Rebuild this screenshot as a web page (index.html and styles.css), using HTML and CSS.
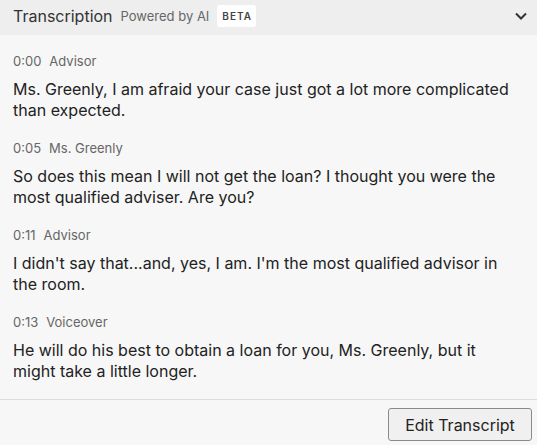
FILE: index.html
```html
<!DOCTYPE html>
<html lang="en">
<head>
    <meta charset="UTF-8">
    <title>Transcription</title>
    <link rel="stylesheet" href="styles.css">
</head>
<body>
    <div class="panel">
        <!-- header -->
        <div class="panel-header">
            <span class="title">Transcription</span>
            <span class="powered">Powered by AI</span>
            <span class="badge">BETA</span>
            <svg class="chevron" width="14" height="14" viewBox="0 0 14 14">
                <path d="M2 4.5 L7 9.5 L12 4.5" fill="none" stroke="#333" stroke-width="2"/>
            </svg>
        </div>

        <!-- transcript lines -->
        <div class="entries">
            <div class="entry">
                <div class="meta"><span class="time">0:00</span>Advisor</div>
                <p class="text">Ms. Greenly, I am afraid your case just got a lot more complicated than expected.</p>
            </div>
            <div class="entry">
                <div class="meta"><span class="time">0:05</span>Ms. Greenly</div>
                <p class="text">So does this mean I will not get the loan? I thought you were the most qualified adviser. Are you?</p>
            </div>
            <div class="entry">
                <div class="meta"><span class="time">0:11</span>Advisor</div>
                <p class="text">I didn't say that...and, yes, I am. I'm the most qualified advisor in the room.</p>
            </div>
            <div class="entry">
                <div class="meta"><span class="time">0:13</span>Voiceover</div>
                <p class="text">He will do his best to obtain a loan for you, Ms. Greenly, but it might take a little longer.</p>
            </div>
        </div>

        <div class="panel-footer">
            <button class="edit-btn">Edit Transcript</button>
        </div>
    </div>
</body>
</html>
```

FILE: styles.css
```css
/* page */
body {
    margin: 0;
    font-family: Inter, "Noto Sans", Arial, sans-serif;
    background-color: #f7f7f7;
    color: #222;
}
.panel {
    width: 537px;
    height: 445px;
    display: flex;
    flex-direction: column;
    overflow: hidden;
}
/* header bar */
.panel-header {
    height: 35px;
    flex-shrink: 0;
    background-color: #eeeeee;
    display: flex;
    align-items: center;
    padding: 0 13px 3px;
    box-sizing: border-box;
}
.title {
    font-size: 16px;
    color: #333;
}
.powered {
    font-size: 13px;
    color: #666;
    margin-left: 8px;
}
.badge {
    margin-left: 8px;
    background: #ffffff;
    border-radius: 3px;
    font-size: 10px;
    font-weight: 600;
    letter-spacing: 1px;
    color: #444;
    padding: 5px 4px 5px 5px;
}
.chevron {
    margin-left: auto;
    margin-right: -4px;
}
/* transcript */
.entries {
    flex: 1;
    min-height: 0;
    padding: 17px 26px 0 13px;
}
.entry {
    margin-bottom: 17.5px;
}
.meta {
    font-size: 13px;
    color: #666;
    line-height: 18px;
}
.time {
    margin-right: 8px;
}
.text {
    margin: 8.5px 0 0;
    font-size: 16px;
    line-height: 21.5px;
    color: #222;
}
/* footer */
.panel-footer {
    flex-shrink: 0;
    border-top: 1px solid #dddddd;
    height: 46px;
    display: flex;
    align-items: flex-start;
    justify-content: flex-end;
    padding: 8px 5px 0;
    box-sizing: border-box;
}
.edit-btn {
    font-family: Inter, "Noto Sans", Arial, sans-serif;
    font-size: 16px;
    color: #222;
    background-color: #f0f0f0;
    border: 1px solid #8a8a8a;
    border-radius: 3px;
    height: 33px;
    width: 144px;
    cursor: pointer;
}
```
